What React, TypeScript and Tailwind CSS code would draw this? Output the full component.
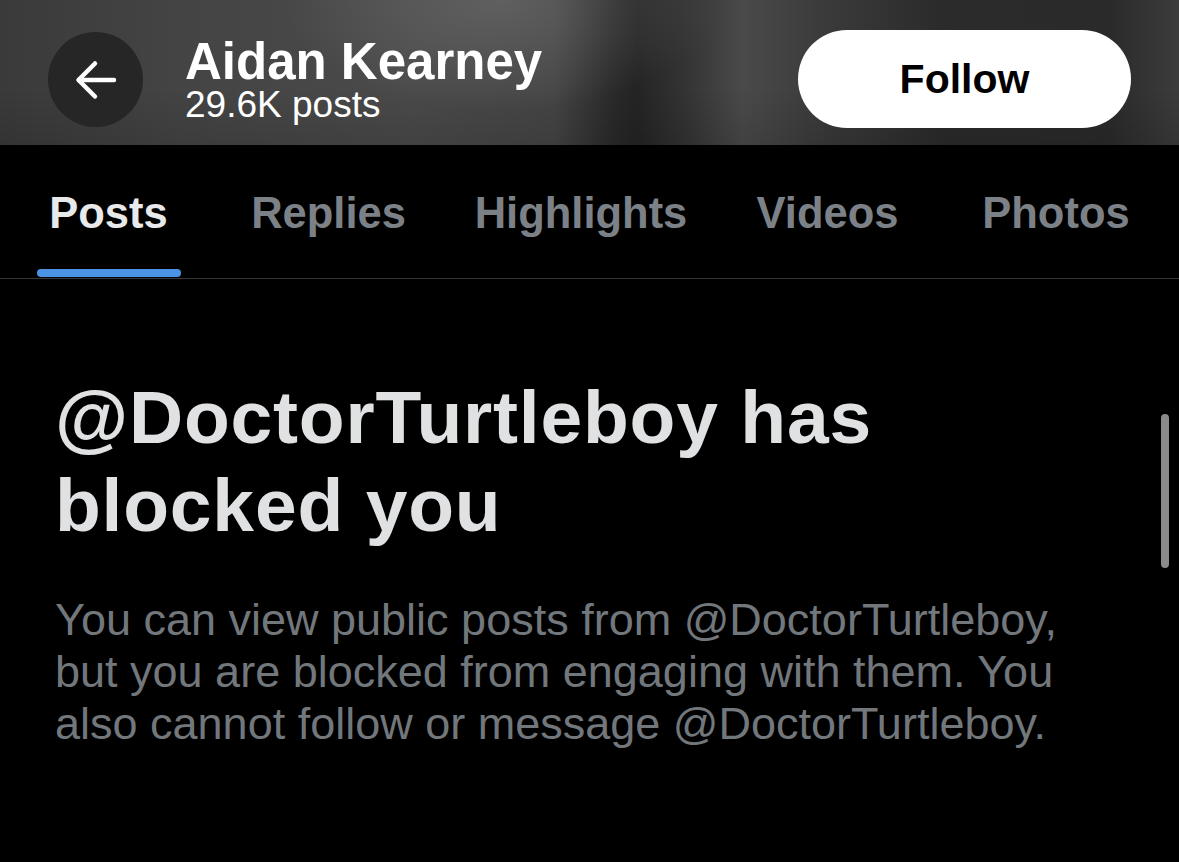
import React from "react";

const tabs = [
  { label: "Posts", w: "w-[217px]", active: true },
  { label: "Replies", w: "w-[223px]", active: false },
  { label: "Highlights", w: "w-[282px]", active: false },
  { label: "Videos", w: "w-[211px]", active: false },
  { label: "Photos", w: "w-[246px]", active: false },
];

export default function App() {
  return (
    <div className="relative w-[1179px] h-[862px] overflow-hidden bg-black font-['Liberation_Sans',Arial,sans-serif]">
      {/* Header */}
      <div className="flex items-start h-[145px] pt-[30px] bg-[image:radial-gradient(ellipse_220px_110px_at_500px_0px,rgba(120,120,120,0.5),transparent),linear-gradient(180deg,rgba(0,0,0,0)_60%,rgba(0,0,0,0.12)_100%),linear-gradient(90deg,#3a3a3a_0%,#444444_15%,#4a4a4a_35%,#454545_47%,#2a2a2a_52%,#242424_54%,#333333_58%,#4a4a4a_63%,#3a3a3a_70%,#2b2b2b_80%,#2a2a2a_94%,#3c3c3c_100%)]">
        <div className="ml-[48px] mt-[2px] w-[95px] h-[95px] rounded-full bg-[#262626] flex items-center justify-center">
          <svg width="95" height="95" viewBox="0 0 95 95" fill="none">
            <path d="M31 48 H66" stroke="#ffffff" strokeWidth="4.5" strokeLinecap="round" />
            <path d="M47 31.5 L30.5 48 L47 64.5" stroke="#ffffff" strokeWidth="4.5" strokeLinecap="round" strokeLinejoin="round" />
          </svg>
        </div>
        <div className="ml-[42px] mt-[9px] flex flex-col">
          <div className="text-[51px] leading-[46px] font-bold text-white">Aidan Kearney</div>
          <div className="mt-[2px] text-[37px] leading-[36px] text-white">29.6K posts</div>
        </div>
        <div className="ml-auto mr-[48px] w-[333px] h-[98px] rounded-full bg-white flex items-center justify-center">
          <span className="text-[41px] leading-[42px] font-bold text-black">Follow</span>
        </div>
      </div>

      {/* Tabs */}
      <div className="flex h-[134px] border-b border-[#333638]">
        {tabs.map((t) => (
          <div key={t.label} className={`${t.w} flex flex-col items-center pt-[46px]`}>
            <span
              className={`text-[43.5px] leading-[44px] font-bold ${
                t.active ? "text-[#e7e9ea]" : "text-[#7c8187]"
              }`}
            >
              {t.label}
            </span>
            {t.active && <div className="mt-auto mb-[1px] w-[144px] h-[8px] rounded-full bg-[#4b93e4]" />}
          </div>
        ))}
      </div>

      {/* Content */}
      <div className="pl-[55px] pt-[94px]">
        <h1 className="text-[75px] leading-[88px] tracking-[0.8px] font-bold text-[#e0e1e2]">
          @DoctorTurtleboy has
          <br />
          blocked you
        </h1>
        <p className="mt-[45px] text-[45px] leading-[52px] text-[#72777c]">
          You can view public posts from @DoctorTurtleboy,
          <br />
          but you are blocked from engaging with them. You
          <br />
          also cannot follow or message @DoctorTurtleboy.
        </p>
      </div>

      {/* Scrollbar */}
      <div className="absolute left-[1161px] top-[414px] w-[8px] h-[154px] rounded-full bg-[#8a8a8a]" />
    </div>
  );
}
